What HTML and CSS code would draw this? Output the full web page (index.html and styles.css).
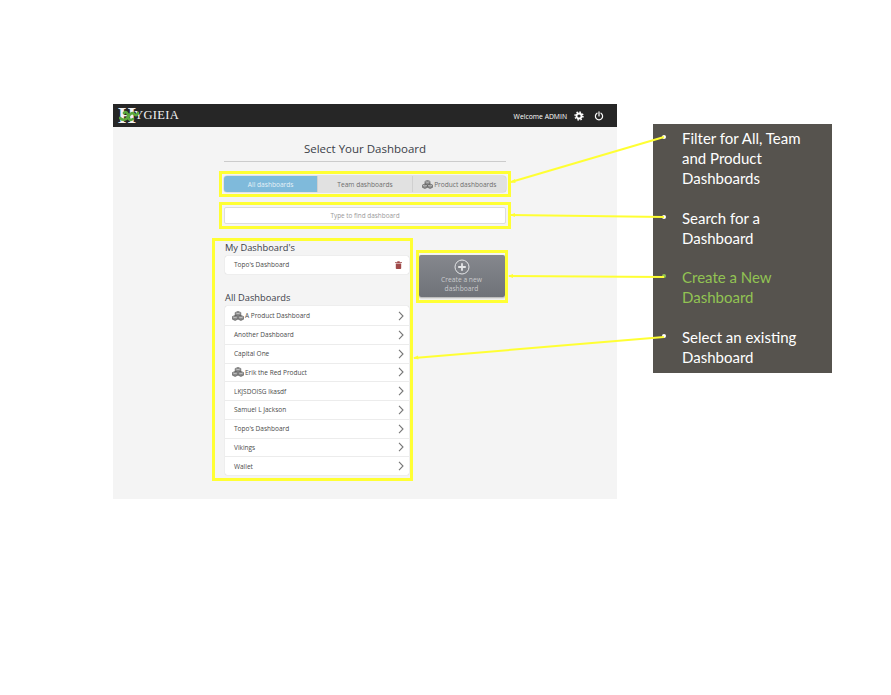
FILE: index.html
```html
<!DOCTYPE html>
<html lang="en">
<head>
  <meta charset="UTF-8" />
  <title>Hygieia - Select Your Dashboard</title>
  <link rel="stylesheet" href="styles.css">
</head>
<body>
  <svg width="0" height="0" class="defs">
    <symbol id="cubes" viewBox="0 0 12 10">
      <path d="M6 .5 8.8 1.5V4.4L6 5.4 3.2 4.4V1.5zM3.1 4.5 5.8 5.5V8.2L3.1 9.4.4 8.2V5.5zM8.9 4.5 11.6 5.5V8.2L8.9 9.4 6.2 8.2V5.500z" fill="#8c8c8c" stroke="#5c5c5c" stroke-width=".7" stroke-linejoin="round"/>
      <path d="M3.6 1.800 6 2.700 8.400 1.800M.8 5.800 3.100 6.700 5.400 5.800M6.600 5.800 8.900 6.700 11.200 5.800" fill="none" stroke="#e2e2e2" stroke-width=".6"/>
    </symbol>
    <symbol id="chevron" viewBox="0 0 6 10">
      <path d="M1 .8 5 5 1 9.2" fill="none" stroke="#777" stroke-width="1.1"/>
    </symbol>
  </svg>

  <div class="slide">
    <div class="app">
      <header class="topbar">
        <div class="logo">
          <span class="logo-h">H</span>YGIEIA
          <svg class="logo-snake" width="20" height="12" viewBox="0 0 20 12">
            <path d="M1 8C4 11 7 10 9 7S13 2 15 4 18 5 19 3M5 3C7 1 9 3 9 6S11 11 14 9" fill="none" stroke="#5aa83c" stroke-width="2.6" stroke-linecap="round"/>
          </svg>
        </div>
        <div class="user">
          <span class="welcome">Welcome ADMIN</span>
          <svg width="10" height="10" viewBox="0 0 10 10">
            <circle cx="5" cy="5" r="3.900" fill="none" stroke="#fff" stroke-width="1.600" stroke-dasharray="1.500 1.560"/>
            <circle cx="5" cy="5" r="2.500" fill="none" stroke="#fff" stroke-width="1.800"/>
          </svg>
          <svg width="10" height="10" viewBox="0 0 10 10">
            <path d="M3 2.200A3.600 3.600 0 1 0 7 2.200M5 .8V5" fill="none" stroke="#fff" stroke-width="1.200" stroke-linecap="round"/>
          </svg>
        </div>
      </header>

      <main class="picker">
        <h1>Select Your Dashboard</h1>

        <div class="marked tabs-box">
          <div class="tabs">
            <div class="tab active">All dashboards</div>
            <div class="tab">Team dashboards</div>
            <div class="tab"><svg width="11" height="9"><use href="#cubes"/></svg> Product dashboards</div>
          </div>
        </div>

        <div class="marked search-box">
          <div class="search">Type to find dashboard</div>
        </div>

        <div class="lower">
          <section class="lists marked-flat">
            <h2>My Dashboard's</h2>
            <div class="rows">
              <div class="row">
                <span class="row-name">Topo's Dashboard</span>
                <svg class="trash" width="7" height="8" viewBox="0 0 7 8">
                  <path d="M0 1.200H7V2H0zM2.300 1.200V.3H4.700V1.200zM.8 2.500H6.200V7.200Q6.200 8 5.400 8H1.600Q.8 8 .8 7.200z" fill="#a04a4a"/>
                </svg>
              </div>
            </div>

            <h2 class="all-title">All Dashboards</h2>
            <div class="rows">
              <div class="row product"><svg width="12" height="10"><use href="#cubes"/></svg><span class="row-name">A Product Dashboard</span><svg class="chev" width="6" height="10"><use href="#chevron"/></svg></div>
              <div class="row"><span class="row-name">Another Dashboard</span><svg class="chev" width="6" height="10"><use href="#chevron"/></svg></div>
              <div class="row"><span class="row-name">Capital One</span><svg class="chev" width="6" height="10"><use href="#chevron"/></svg></div>
              <div class="row product"><svg width="12" height="10"><use href="#cubes"/></svg><span class="row-name">Erik the Red Product</span><svg class="chev" width="6" height="10"><use href="#chevron"/></svg></div>
              <div class="row"><span class="row-name">LKJSDOISG lkasdf</span><svg class="chev" width="6" height="10"><use href="#chevron"/></svg></div>
              <div class="row"><span class="row-name">Samuel L Jackson</span><svg class="chev" width="6" height="10"><use href="#chevron"/></svg></div>
              <div class="row"><span class="row-name">Topo's Dashboard</span><svg class="chev" width="6" height="10"><use href="#chevron"/></svg></div>
              <div class="row"><span class="row-name">Vikings</span><svg class="chev" width="6" height="10"><use href="#chevron"/></svg></div>
              <div class="row"><span class="row-name">Wallet</span><svg class="chev" width="6" height="10"><use href="#chevron"/></svg></div>
            </div>
          </section>

          <div class="create-wrap marked-flat">
            <div class="create">
              <svg width="16" height="16" viewBox="0 0 16 16">
                <circle cx="8" cy="8" r="7" fill="none" stroke="#e4e5e7" stroke-width="1"/>
                <path d="M8 4.200V11.800M4.200 8H11.800" stroke="#e4e5e7" stroke-width="1.800"/>
              </svg>
              <span>Create a new<br>dashboard</span>
            </div>
          </div>
        </div>
      </main>
    </div>

    <aside class="notes">
      <div class="note"><i class="dot"></i><p>Filter for All, Team and Product Dashboards</p></div>
      <div class="note"><i class="dot"></i><p>Search for a Dashboard</p></div>
      <div class="note green"><i class="dot"></i><p>Create a New Dashboard</p></div>
      <div class="note"><i class="dot"></i><p>Select an existing Dashboard</p></div>
    </aside>

    <!-- callout lines go over everything -->
    <svg class="callouts" width="891" height="695" viewBox="0 0 891 695">
      <g fill="none" stroke="#ffff33" stroke-width="2">
        <path d="M511 182 664 137"/>
        <path d="M511 215 664 217"/>
        <path d="M509 276 664 277"/>
        <path d="M414 358 664 337"/>
      </g>
      <g fill="#ffff33">
        <path d="M510 182 515 179 515.500 183z"/>
        <path d="M510 215 515 213 515 217z"/>
        <path d="M508 276 513 274 513 278z"/>
        <path d="M413 358 418 355.500 418.500 359.500z"/>
      </g>
    </svg>
  </div>
</body>
</html>
```

FILE: styles.css
```css
body {
  margin: 0;
  background: #fff;
  font-family: 'Open Sans', sans-serif;
  color: #444;
}
.defs {
  position: absolute;
}
.slide {
  position: relative;
  width: 891px;
  height: 695px;
  padding: 104px 0 0 113px;
  box-sizing: border-box;
  display: flex;
  align-items: flex-start;
  overflow: hidden;
}
.callouts {
  position: absolute;
  left: 0;
  top: 0;
  pointer-events: none;
}

/* the app window */
.app {
  width: 504px;
  height: 395px;
  flex: none;
  background: #f4f4f4;
}
.topbar {
  height: 23px;
  background: #262626;
  display: flex;
  align-items: center;
  justify-content: space-between;
  padding: 0 13px 0 5px;
  color: #fff;
}
.logo {
  position: relative;
  font-family: 'Liberation Serif', serif;
  font-size: 12.5px;
  letter-spacing: .3px;
  color: #f2f2f2;
  display: flex;
  align-items: center;
}
.logo-h {
  font-size: 23px;
  line-height: 20px;
  font-weight: bold;
  margin-right: -2px;
}
.logo-snake {
  position: absolute;
  left: 1px;
  top: 4px;
}
.user {
  display: flex;
  align-items: center;
  gap: 7px;
  font-size: 6.8px;
}
.welcome {
  padding-top: 1px;
}
.user svg:last-child {
  margin-left: 3px;
}

.picker {
  width: 282px;
  margin: 0 auto;
}
h1 {
  margin: 14px 0 0;
  padding-bottom: 4px;
  border-bottom: 1px solid #ccc;
  font-size: 11.5px;
  line-height: 16px;
  font-weight: 400;
  text-align: center;
  color: #3b4048;
}

/* yellow highlight boxes */
.marked {
  outline: 3px solid #ffff33;
  outline-offset: 2px;
}
.marked-flat {
  outline: 3px solid #ffff33;
}

.tabs-box {
  margin-top: 14px;
}
.tabs {
  display: flex;
  height: 16px;
  border-radius: 3px;
  background: #e1e1e1;
  box-shadow: 0 0 0 .5px #cfcfcf;
  font-size: 6.6px;
  color: #6e6e6e;
}
.tab {
  flex: 1 1 0;
  box-sizing: border-box;
  display: flex;
  align-items: center;
  justify-content: center;
  border-left: 1px solid #d0d0d0;
}
.tab svg {
  margin-right: 1px;
}
.tab:first-child {
  border-left: 0;
}
.tab.active {
  background: #7fbadb;
  border-radius: 3px 0 0 3px;
  color: #e6f1f7;
}

.search-box {
  margin-top: 15px;
}
.search {
  height: 17px;
  box-sizing: border-box;
  background: #fff;
  border: 1px solid #ddd;
  border-radius: 2px;
  font-size: 6.4px;
  line-height: 15px;
  text-align: center;
  color: #999;
}

.lower {
  display: flex;
  align-items: flex-start;
  margin: 17px 0 0 -9px;
}
.lists {
  width: 195px;
  flex: none;
  box-sizing: border-box;
  padding: .5px 1px 2.5px 10px;
}
h2 {
  margin: 0 0 2px;
  font-size: 9.3px;
  line-height: 12px;
  font-weight: 400;
  color: #3b4048;
}
.all-title {
  margin-top: 18px;
}
.rows {
  background: #fff;
  box-shadow: 0 0 1px rgba(0,0,0,.25);
  border-radius: 2px;
}
.row {
  height: 18.75px;
  box-sizing: border-box;
  display: flex;
  align-items: center;
  padding: 0 6px 0 9px;
  border-top: 1px solid #ececec;
  font-size: 6.5px;
  color: #4a4a4a;
}
.row:first-child {
  border-top: 0;
}
.row.product {
  padding-left: 7px;
  gap: 1px;
}
.row-name {
  flex: 1;
}
.chev {
  margin-right: -1px;
}
.trash {
  margin-right: 1px;
}

.create-wrap {
  width: 86px;
  height: 47px;
  flex: none;
  margin: 12px 0 0 9px;
  padding-top: 2px;
  box-sizing: border-box;
}
.create {
  height: 42px;
  box-sizing: border-box;
  padding: 4px 1px 0 0;
  border-radius: 2px;
  background: linear-gradient(#85878d, #6f7278);
  box-shadow: 0 1px 2px rgba(0,0,0,.3);
  text-align: center;
  font-size: 6.7px;
  line-height: 9px;
  color: #c9cacd;
}
.create svg {
  display: block;
  margin: 0 auto;
}

/* dark notes panel on the right */
.notes {
  width: 179px;
  height: 249px;
  flex: none;
  margin: 20px 0 0 36px;
  box-sizing: border-box;
  padding-top: 5px;
  background: #56534e;
  font-family: 'Lato', sans-serif;
  font-size: 15px;
  line-height: 19.9px;
  color: #fff;
}
.note {
  display: flex;
  align-items: flex-start;
  padding: 0 20px 0 9px;
  margin-bottom: 19.9px;
}
.note p {
  margin: 0;
}
.dot {
  width: 4px;
  height: 4px;
  flex: none;
  margin: 6px 16px 0 0;
  border-radius: 50%;
  background: #fff;
}
.green {
  color: #92c353;
}
.green .dot {
  background: #92c353;
}
```
